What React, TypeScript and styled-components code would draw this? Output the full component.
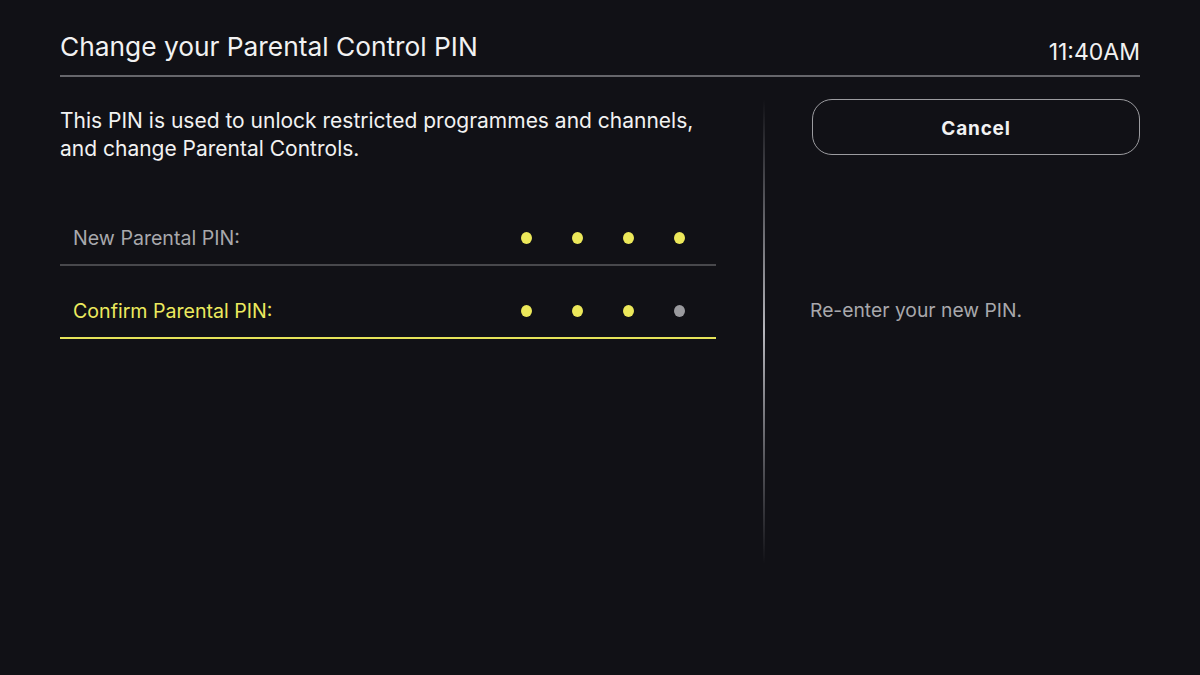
import React from "react";
import styled, { createGlobalStyle } from "styled-components";

const GlobalStyle = createGlobalStyle`
  html, body {
    margin: 0;
    padding: 0;
    background: #111116;
  }
  body {
    font-family: Inter, "Noto Sans", sans-serif;
    color: #f2f2f2;
  }
`;

const Page = styled.div`
  width: 1200px;
  height: 675px;
  box-sizing: border-box;
  padding: 0 60px;
  background: #111116;
  overflow: hidden;
`;
const Header = styled.div`
  display: flex;
  align-items: flex-end;
  justify-content: space-between;
  height: 77px;
  padding-bottom: 10px;
  border-bottom: 2px solid #66666b;
  box-sizing: border-box;
`;
const Title = styled.div`
  font-size: 26.3px;
  line-height: 32px;
  margin-bottom: 2px;
`;
const Clock = styled.div`
  font-size: 23px;
  line-height: 28px;
  margin-bottom: -1px;
`;
const Main = styled.div`
  display: flex;
  padding-top: 22px;
`;
const Left = styled.div`
  width: 656px;
  padding-top: 8px;
`;
const Description = styled.p`
  margin: 0 0 30px;
  font-size: 21px;
  line-height: 28px;
`;
const Row = styled.div<{ active?: boolean }>`
  display: flex;
  align-items: flex-end;
  justify-content: space-between;
  height: 73px;
  padding: 0 31px 14px 13px;
  box-sizing: border-box;
  border-bottom: 2px solid ${p => (p.active ? "#e6e45a" : "#48484c")};
`;
const Label = styled.div<{ active?: boolean }>`
  font-size: 19.6px;
  line-height: 24px;
  color: ${p => (p.active ? "#ecea5e" : "#a8a8ac")};
`;
const Dots = styled.div`
  display: flex;
  gap: 40px;
  padding-bottom: 6px;
`;
const Dot = styled.span<{ filled: boolean }>`
  width: 11px;
  height: 12px;
  border-radius: 50%;
  background: ${p => (p.filled ? "#ece85a" : "#9a9a9e")};
  display: block;
`;
const DividerWrap = styled.div`
  width: 96px;
  display: flex;
  justify-content: center;
`;
const Divider = styled.div`
  width: 2px;
  height: 465px;
  background: linear-gradient(
    to bottom,
    rgba(140, 140, 146, 0) 0%,
    rgba(120, 120, 126, 0.6) 20%,
    rgba(190, 190, 196, 0.95) 50%,
    rgba(120, 120, 126, 0.6) 80%,
    rgba(140, 140, 146, 0) 100%
  );
`;
const Right = styled.div`
  width: 328px;
  display: flex;
  flex-direction: column;
`;
const CancelButton = styled.button`
  height: 56px;
  width: 100%;
  border: 1.5px solid #9c9ca0;
  border-radius: 20px;
  background: #111116;
  color: #f2f2f2;
  font-family: Inter, "Noto Sans", sans-serif;
  font-weight: 700;
  font-size: 19px;
  letter-spacing: 0.8px;
  padding-top: 4px;
`;
const Hint = styled.div`
  margin-top: 143px;
  margin-left: -2px;
  font-size: 19.3px;
  line-height: 24px;
  color: #a8a8ac;
`;

const pins = [
  { label: "New Parental PIN:", count: 4, active: false },
  { label: "Confirm Parental PIN:", count: 3, active: true },
];

export default function App() {
  return (
    <Page>
      <GlobalStyle />
      <Header>
        <Title>Change your Parental Control PIN</Title>
        <Clock>11:40AM</Clock>
      </Header>
      <Main>
        <Left>
          <Description>
            This PIN is used to unlock restricted programmes and channels,
            <br />
            and change Parental Controls.
          </Description>
          {pins.map(pin => (
            <Row key={pin.label} active={pin.active}>
              <Label active={pin.active}>{pin.label}</Label>
              <Dots>
                {[0, 1, 2, 3].map(i => (
                  <Dot key={i} filled={i < pin.count} />
                ))}
              </Dots>
            </Row>
          ))}
        </Left>
        <DividerWrap>
          <Divider />
        </DividerWrap>
        <Right>
          <CancelButton>Cancel</CancelButton>
          <Hint>Re-enter your new PIN.</Hint>
        </Right>
      </Main>
    </Page>
  );
}
